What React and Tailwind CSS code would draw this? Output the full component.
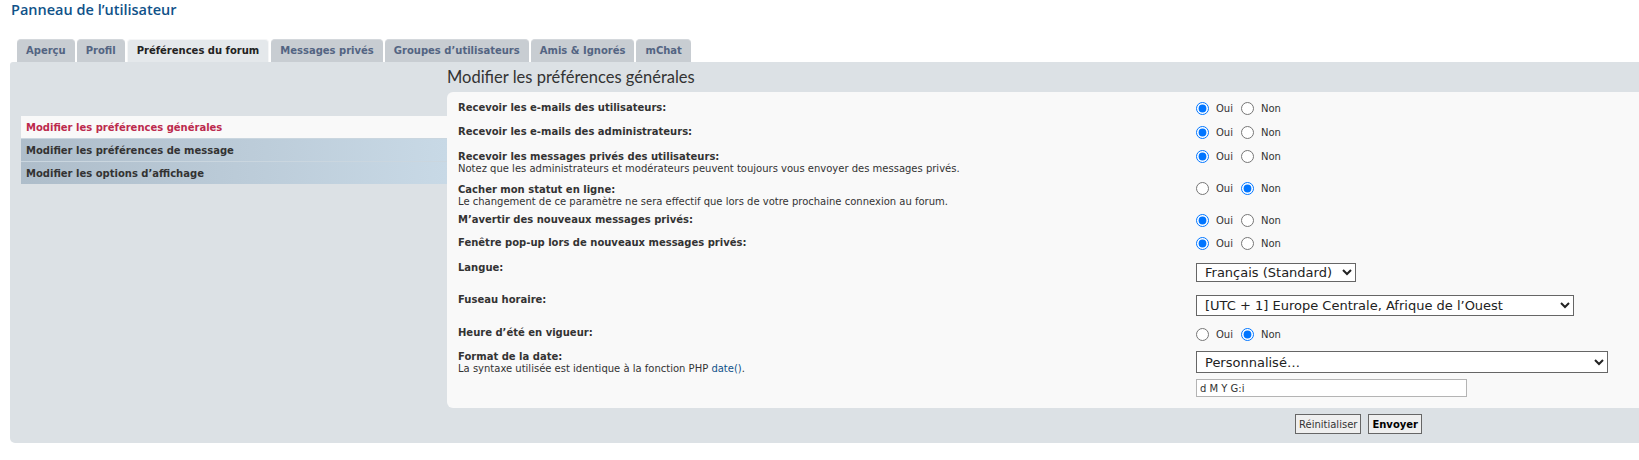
import React from "react";

const tabs = [
  { label: "Aperçu" },
  { label: "Profil" },
  { label: "Préférences du forum", active: true },
  { label: "Messages privés" },
  { label: "Groupes d’utilisateurs" },
  { label: "Amis & Ignorés" },
  { label: "mChat" },
];

const menu = [
  { label: "Modifier les préférences générales", active: true },
  { label: "Modifier les préférences de message" },
  { label: "Modifier les options d’affichage" },
];

// hauteur de ligne + décalage vertical du champ
const rows = [
  { id: "mail_users", label: "Recevoir les e-mails des utilisateurs:", radio: "oui", h: "h-[24px]", pt: "pt-[6px]" },
  { id: "mail_admin", label: "Recevoir les e-mails des administrateurs:", radio: "oui", h: "h-[25px]", pt: "pt-[6px]" },
  {
    id: "pm",
    label: "Recevoir les messages privés des utilisateurs:",
    desc: "Notez que les administrateurs et modérateurs peuvent toujours vous envoyer des messages privés.",
    radio: "oui",
    h: "h-[33px]",
    pt: "pt-[5px]",
  },
  {
    id: "hide",
    label: "Cacher mon statut en ligne:",
    desc: "Le changement de ce paramètre ne sera effectif que lors de votre prochaine connexion au forum.",
    radio: "non",
    h: "h-[30px]",
    pt: "pt-[4px]",
  },
  { id: "notify", label: "M’avertir des nouveaux messages privés:", radio: "oui", h: "h-[23px]", pt: "pt-[6px]" },
  { id: "popup", label: "Fenêtre pop-up lors de nouveaux messages privés:", radio: "oui", h: "h-[25px]", pt: "pt-[6px]" },
];

function Radios({ name, value }) {
  return (
    <div className="flex items-center h-[13px] text-[10px] text-[#333]">
      <label className="flex items-center gap-[7px] mr-[8px]">
        <input type="radio" name={name} defaultChecked={value === "oui"} className="m-0 w-[13px] h-[13px]" />
        Oui
      </label>
      <label className="flex items-center gap-[7px]">
        <input type="radio" name={name} defaultChecked={value === "non"} className="m-0 w-[13px] h-[13px]" />
        Non
      </label>
    </div>
  );
}

function Label({ children, desc }) {
  return (
    <div className="pt-[6px] leading-[12px] text-[10px] text-[#333]">
      <div className="font-bold">{children}</div>
      {desc && <div>{desc}</div>}
    </div>
  );
}

export default function App() {
  return (
    <div className="w-full h-[460px] overflow-hidden bg-white font-['DejaVu_Sans',sans-serif]">
      {/* titre */}
      <h2 className="pl-[11px] h-[39px] text-[14.5px] leading-[20px] font-semibold text-[#105289] font-['Open_Sans',sans-serif]">
        Panneau de l’utilisateur
      </h2>

      {/* onglets */}
      <div className="flex gap-[2px] pl-[17px] h-[23px]">
        {tabs.map((t) => (
          <div
            key={t.label}
            className={
              t.active
                ? "px-[9px] rounded-t-[4px] bg-[#e4e8eb] border-t border-x border-[#f5f6f7] text-[#222] text-[10px] font-bold leading-[22px]"
                : "px-[9px] rounded-t-[4px] bg-[#c8cdd2] border-t border-[#d4d8dc] text-[#536482] text-[10px] font-bold leading-[22px]"
            }
          >
            {t.label}
          </div>
        ))}
      </div>

      {/* panneau */}
      <div className="ml-[10px] h-[381px] bg-[#dce1e5] rounded-bl-[5px] rounded-tl-[3px] flex">
        {/* menu gauche */}
        <div className="w-[437px] pl-[11px] pt-[54px] shrink-0">
          {menu.map((m) => (
            <div
              key={m.label}
              className={
                m.active
                  ? "h-[22px] pl-[5px] leading-[23px] text-[10px] font-bold text-[#bc2a4d] bg-[#f9f9f9]"
                  : "h-[23px] pl-[5px] leading-[23px] text-[10px] font-bold text-[#333] bg-gradient-to-r from-[#aebdca] to-[#c8d9e6] border-t border-[#cad6df]"
              }
            >
              {m.label}
            </div>
          ))}
        </div>

        {/* contenu */}
        <div className="flex-1 min-w-0">
          <div className="h-[30px] flex items-center text-[16.5px] text-[#333] font-['Lato',sans-serif]">
            Modifier les préférences générales
          </div>

          <div className="bg-[#f9f9f9] rounded-l-[6px] pt-[4px] pl-[11px]">
            {rows.map((r) => (
              <div key={r.id} className={"flex " + r.h}>
                <div className="w-[738px] shrink-0">
                  <Label desc={r.desc}>{r.label}</Label>
                </div>
                <div className={r.pt}>
                  <Radios name={r.id} value={r.radio} />
                </div>
              </div>
            ))}

            {/* langue */}
            <div className="flex h-[32px]">
              <div className="w-[738px] shrink-0">
                <Label>Langue:</Label>
              </div>
              <div className="pt-[4px]">
                <select className="w-[160px] h-[19px] border border-[#666] bg-white text-[13px] leading-[17px] text-[#222] px-[4px]">
                  <option>Français (Standard)</option>
                </select>
              </div>
            </div>

            {/* fuseau */}
            <div className="flex h-[33px]">
              <div className="w-[738px] shrink-0">
                <Label>Fuseau horaire:</Label>
              </div>
              <div className="pt-[5px]">
                <select className="w-[378px] h-[21px] border border-[#666] bg-white text-[13px] leading-[19px] text-[#222] px-[4px]">
                  <option>[UTC + 1] Europe Centrale, Afrique de l’Ouest</option>
                </select>
              </div>
            </div>

            {/* heure d'été */}
            <div className="flex h-[24px]">
              <div className="w-[738px] shrink-0">
                <Label>Heure d’été en vigueur:</Label>
              </div>
              <div className="pt-[7px]">
                <Radios name="dst" value="non" />
              </div>
            </div>

            {/* format date */}
            <div className="flex h-[63px]">
              <div className="w-[738px] shrink-0">
                <div className="pt-[6px] leading-[12px] text-[10px] text-[#333]">
                  <div className="font-bold">Format de la date:</div>
                  <div>
                    La syntaxe utilisée est identique à la fonction PHP{" "}
                    <span className="text-[#105289]">date()</span>.
                  </div>
                </div>
              </div>
              <div className="pt-[6px] flex flex-col gap-[6px]">
                <select className="w-[412px] h-[22px] border border-[#666] bg-white text-[13px] leading-[20px] text-[#222] px-[4px]">
                  <option>Personnalisé…</option>
                </select>
                <input
                  type="text"
                  defaultValue="d M Y G:i"
                  className="w-[271px] h-[18px] border border-[#b4b4b4] bg-white text-[10px] text-[#333] px-[3px]"
                />
              </div>
            </div>
          </div>

          {/* boutons */}
          <div className="flex gap-[7px] pl-[848px] pt-[6px]">
            <button className="h-[20px] px-[3px] border border-[#666] bg-[#efefef] text-[10px] text-[#333]">
              Réinitialiser
            </button>
            <button className="h-[20px] px-[3px] border border-[#666] bg-[#efefef] text-[10px] font-bold text-black">
              Envoyer
            </button>
          </div>
        </div>
      </div>
    </div>
  );
}
